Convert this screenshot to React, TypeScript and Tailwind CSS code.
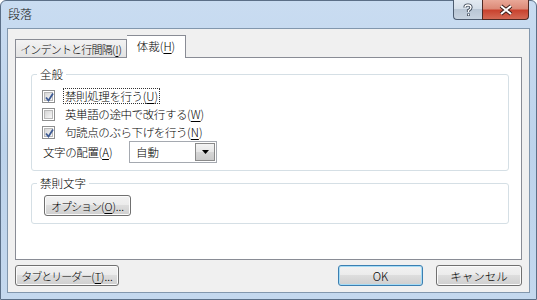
import React from 'react'

const U = ({ c }: { c: string }) => <span className="underline underline-offset-[2px]">{c}</span>

// mnemonic tail like "(U)" kept at normal spacing
const M = ({ c, dots }: { c: string; dots?: boolean }) => (
  <span className="tracking-normal">
    (<U c={c} />){dots ? '...' : ''}
  </span>
)

const Check = ({ checked }: { checked: boolean }) => (
  <span className="block w-[13px] h-[13px] border border-[#8e8f8f] bg-white p-px shrink-0">
    <span className="relative block w-full h-full border border-[#b8b8b8] bg-linear-to-br from-[#d6d6d6] to-[#f7f7f7]">
      {checked && (
        <svg className="absolute -left-px -top-px" width="11" height="11" viewBox="0 0 11 11">
          <path d="M2 5.5 L4.5 8.5 L9 1.5" fill="none" stroke="#3d5a93" strokeWidth="1.8" />
        </svg>
      )}
    </span>
  </span>
)

const Btn = ({ children, w, def }: { children: React.ReactNode; w: string; def?: boolean }) => (
  <div
    className={`${w} h-[21px] rounded-[3px] border ${
      def ? 'border-[#3c7fb1] shadow-[inset_0_0_0_1px_#a6dcf6]' : 'border-[#707070] shadow-[inset_0_0_0_1px_#fbfbfb]'
    } bg-[linear-gradient(#f2f2f2,#ebebeb_50%,#dddddd_50%,#cfcfcf)] flex items-center justify-center leading-[14px] text-black whitespace-nowrap`}
  >
    {children}
  </div>
)

const Row = ({ checked, focus, children }: { checked: boolean; focus?: boolean; children: React.ReactNode }) => (
  <div className="h-[18px] flex items-center gap-[8px]">
    <Check checked={checked} />
    <span className={`px-px border ${focus ? 'border-dotted border-[#333]' : 'border-transparent'} leading-[14px] tracking-[-0.4px]`}>{children}</span>
  </div>
)

export default function App() {
  return (
    <div className="w-[537px] h-[300px] overflow-hidden font-['Noto_Sans_CJK_JP',sans-serif] font-light text-[11.5px] text-black whitespace-nowrap">
      <div className="w-full h-full rounded-t-[6px] border border-[#5b6f87] bg-linear-to-b from-[#c9dcf1] via-[#bdd3eb] to-[#c4d8ee] flex flex-col">
        {/* title bar */}
        <div className="h-[27px] flex items-start shrink-0">
          <div className="self-center pl-[7px] text-[12px] leading-[14px] text-[#111] pb-[2px]">段落</div>
          <div className="ml-auto mr-[7px] flex -mt-px">
            <div className="w-[29px] h-[20px] rounded-bl-[4px] border border-t-0 border-r-0 border-[#4d5c70] bg-[linear-gradient(#e3eaf2,#d3dde8_50%,#b9c6d5_50%,#c7d3e0)] flex items-center justify-center">
              <svg width="12" height="14" viewBox="0 0 12 14">
                <path d="M3 4.5 Q3 2 6 2 Q9 2 9 4.5 Q9 6 6.5 7.5 L6.5 9" fill="none" stroke="#3b4656" strokeWidth="3.2" />
                <rect x="5" y="10.5" width="3" height="2.5" fill="#3b4656" />
                <path d="M3 4.5 Q3 2 6 2 Q9 2 9 4.5 Q9 6 6.5 7.5 L6.5 9" fill="none" stroke="#fff" strokeWidth="1.4" />
                <rect x="5.8" y="11" width="1.5" height="1.5" fill="#fff" />
              </svg>
            </div>
            <div className="w-[47px] h-[20px] rounded-br-[4px] border border-t-0 border-[#4f2a24] bg-[linear-gradient(#e9a898,#dc8a78_45%,#c9432f_55%,#d46a55)] flex items-center justify-center">
              <svg width="16" height="12" viewBox="0 0 16 12">
                <path d="M3 2 L13 10 M13 2 L3 10" stroke="#3a1d18" strokeWidth="4" />
                <path d="M3 2 L13 10 M13 2 L3 10" stroke="#fff" strokeWidth="2" />
              </svg>
            </div>
          </div>
        </div>

        {/* client area */}
        <div className="mx-[6px] h-[265px] border border-[#8297ad] bg-[#f0f0f0] flex flex-col px-[7px] pt-[6px]">
          {/* tabs */}
          <div className="h-[22px] flex items-end shrink-0">
            <div className="h-[18px] w-[112px] border border-b-0 border-[#898c95] bg-linear-to-b from-[#f3f3f3] to-[#e3e3e3] flex items-center justify-center leading-[14px] text-[11px]">
              <span className="tracking-[-0.8px]">インデントと行間隔</span>
              <M c="I" />
            </div>
            <div className="relative z-10 -mb-px h-[23px] w-[59px] border border-b-0 border-l-0 border-[#898c95] bg-white flex items-center justify-center leading-[14px] pb-[2px]">
              体裁<M c="H" />
            </div>
          </div>

          {/* panel */}
          <div className="h-[203px] border border-[#898c95] bg-white px-[15px] pr-[12px] flex flex-col">
            <fieldset className="mt-[9px] border border-[#d5dfe5] rounded-[3px] pl-[10px] pt-[6px] pb-[7px]">
              <legend className="ml-[-5px] px-[3px] leading-[14px]">全般</legend>
              <Row checked focus>
                禁則処理を行う<M c="U" />
              </Row>
              <Row checked={false}>
                英単語の途中で改行する<M c="W" />
              </Row>
              <Row checked>
                句読点のぶら下げを行う<M c="N" />
              </Row>
              <div className="h-[22px] flex items-center">
                <span className="w-[87px] leading-[14px] pl-px tracking-[-0.4px]">
                  文字の配置<M c="A" />
                </span>
                <div className="w-[88px] h-[22px] border border-[#a5a9b0] bg-white flex items-center pl-[6px] pr-px">
                  <span className="leading-[14px]">自動</span>
                  <div className="ml-auto w-[20px] h-[18px] border border-[#8a8a8a] bg-[linear-gradient(#f4f4f4,#e6e6e6_50%,#d6d6d6_50%,#cacaca)] flex items-center justify-center">
                    <svg width="7" height="4" viewBox="0 0 7 4">
                      <path d="M0 0 H7 L3.5 4 Z" fill="#000" />
                    </svg>
                  </div>
                </div>
              </div>
            </fieldset>

            <fieldset className="mt-[5px] border border-[#d5dfe5] rounded-[3px] pl-[12px] pt-[5px] pb-[7px]">
              <legend className="ml-[-7px] px-[3px] leading-[14px]">禁則文字</legend>
              <Btn w="w-[87px]">
                <span className="tracking-[-1px] text-[11px]">オプション</span>
                <span className="text-[11px]">
                  <M c="O" dots />
                </span>
              </Btn>
            </fieldset>
          </div>

          {/* bottom buttons */}
          <div className="mt-[5px] flex items-center">
            <Btn w="w-[104px]">
              <span className="tracking-[-1px] text-[11px]">タブとリーダー</span>
              <span className="text-[11px]">
                <M c="T" dots />
              </span>
            </Btn>
            <div className="ml-auto flex gap-[13px]">
              <Btn w="w-[85px]" def>
                OK
              </Btn>
              <Btn w="w-[86px]">キャンセル</Btn>
            </div>
          </div>
        </div>
      </div>
    </div>
  )
}
